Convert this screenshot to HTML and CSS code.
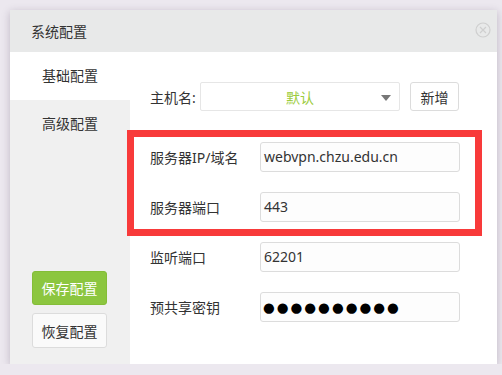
FILE: index.html
```html
<!DOCTYPE html>
<html lang="zh-CN">
<head>
  <meta charset="UTF-8" />
  <title>系统配置</title>
  <link rel="stylesheet" href="styles.css">
</head>
<body>
  <div class="dialog">
    <div class="dialog-head">
      <span>系统配置</span>
      <svg class="close" width="16" height="16" viewBox="0 0 16 16">
        <circle cx="8" cy="8" r="7" fill="none" stroke="#cfcfcf" stroke-width="1.2"/>
        <path d="M5 5 L11 11 M11 5 L5 11" stroke="#cfcfcf" stroke-width="1.2"/>
      </svg>
    </div>
    <div class="dialog-body">
      <div class="sidebar">
        <div class="tab active">基础配置</div>
        <div class="tab">高级配置</div>
        <div class="side-actions">
          <button class="btn btn-save">保存配置</button>
          <button class="btn">恢复配置</button>
        </div>
      </div>
      <div class="content">
        <div class="host-row">
          <label class="host-label">主机名:</label>
          <div class="select">
            <span>默认</span>
            <i class="caret"></i>
          </div>
          <button class="btn btn-add">新增</button>
        </div>

        <div class="highlight">
          <div class="row">
            <label>服务器IP/域名</label>
            <div class="field">webvpn.chzu.edu.cn</div>
          </div>
          <div class="row">
            <label>服务器端口</label>
            <div class="field">443</div>
          </div>
        </div>

        <div class="row row-listen">
          <label>监听端口</label>
          <div class="field">62201</div>
        </div>
        <div class="row">
          <label>预共享密钥</label>
          <div class="field dots">●●●●●●●●●●</div>
        </div>
      </div>
    </div>
  </div>
</body>
</html>
```

FILE: styles.css
```css
body {
  margin: 0;
  padding: 10px 0 0 10px;
  background: #ece8ef;
  font-family: "Noto Sans", "Noto Sans CJK SC", sans-serif;
  font-size: 14px;
  color: #333;
}
.dialog {
  width: 487px;
  height: 354px;
  background: #fff;
  box-shadow: 0 2px 8px rgba(60, 40, 70, 0.25);
  display: flex;
  flex-direction: column;
}
.dialog-head {
  height: 42px;
  background: #e8e9e9;
  display: flex;
  align-items: center;
  justify-content: space-between;
  padding: 0 6px 0 21px;
  flex-shrink: 0;
}
.close { margin-top: -2px; }
.dialog-body { flex: 1; display: flex; }

.sidebar {
  width: 120px;
  background: #f0f0f0;
  display: flex;
  flex-direction: column;
}
.tab {
  height: 48px;
  line-height: 48px;
  text-align: center;
}
.tab.active { background: #fff; }
.side-actions {
  margin-top: auto;
  padding: 0 0 16px 22px;
  display: flex;
  flex-direction: column;
  gap: 8px;
}
.btn {
  font-family: inherit;
  font-size: 14px;
  color: #333;
  background: #fff;
  border: 1px solid #dcdcdc;
  border-radius: 3px;
  cursor: pointer;
}
.side-actions .btn { width: 75px; height: 35px; padding: 0; background: #fafafa; }
.side-actions .btn-save {
  height: 34px;
  background: #8cc63f;
  border-color: #84bd38;
  color: #fff;
}

.content { flex: 1; padding: 30px 0 0 20px; }
.host-row { display: flex; align-items: center; height: 29px; }
.host-label { width: 50px; }
.select {
  width: 200px;
  height: 29px;
  box-sizing: border-box;
  border: 1px solid #e6e6e6;
  border-radius: 2px;
  display: flex;
  align-items: center;
  justify-content: center;
  position: relative;
  color: #9ccc3c;
}
.caret {
  position: absolute;
  right: 8px;
  top: 12px;
  border-left: 5px solid transparent;
  border-right: 5px solid transparent;
  border-top: 6px solid #777;
}
.btn-add { width: 49px; height: 29px; margin-left: 10px; padding: 0; }

.highlight {
  margin: 26px 0 0 -16px;
  width: 341px;
  padding: 5px 0 7px 16px;
  box-sizing: border-box;
  outline: 7px solid #f83a3a;
  display: flex;
  flex-direction: column;
  gap: 20px;
}
.row { display: flex; align-items: center; height: 30px; }
.row + .row { margin-top: 20px; }
.highlight .row + .row { margin-top: 0; }
.row-listen { margin-top: 13px; }
.row label { width: 110px; }
.field {
  width: 200px;
  height: 30px;
  box-sizing: border-box;
  border: 1px solid #dcdcdc;
  border-radius: 3px;
  background: #fdfdfd;
  padding-left: 3px;
  line-height: 28px;
}
.dots {
  font-family: "DejaVu Sans", sans-serif;
  font-size: 13.5px;
  letter-spacing: 2px;
  color: #000;
  padding-left: 2px;
}
```
